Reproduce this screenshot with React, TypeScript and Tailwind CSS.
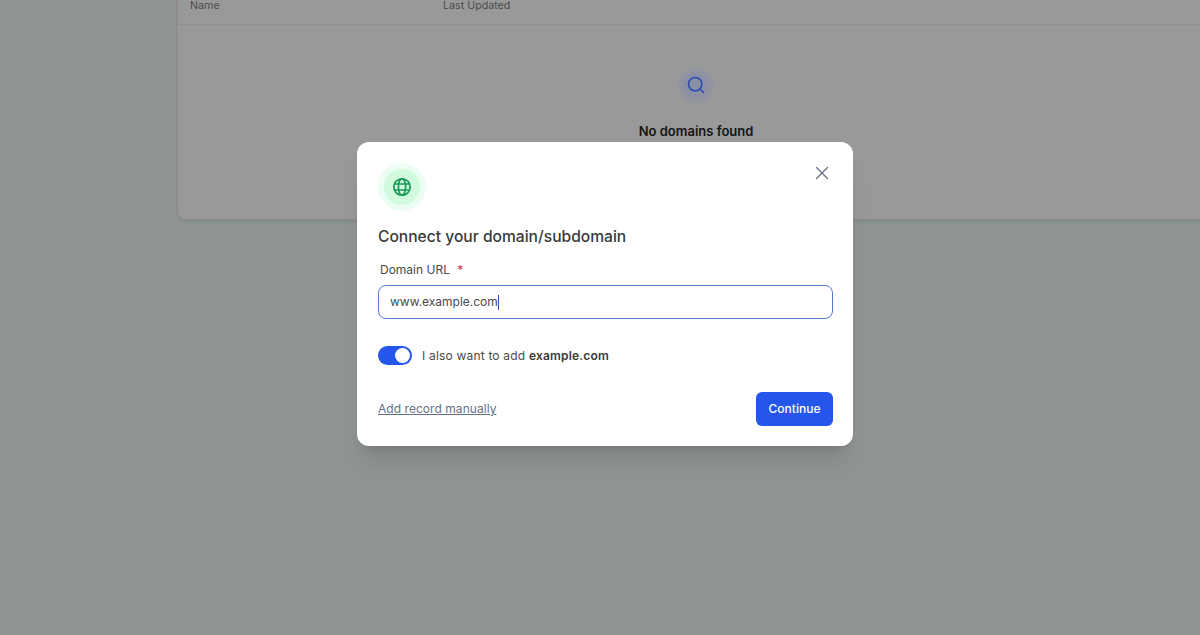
import React from "react";
import { Search, X } from "lucide-react";

function GlobeIcon() {
  return (
    <svg width="20" height="20" viewBox="0 0 20 20" fill="none" stroke="#179a55" strokeWidth="1.7">
      <circle cx="10" cy="10" r="8.2" />
      <ellipse cx="10" cy="10" rx="3.6" ry="8.2" />
      <path d="M2.6 7h14.8M2.6 13h14.8" />
    </svg>
  );
}

function EmptyTable() {
  return (
    <div className="h-[220px] w-[1037px] ml-[177px] rounded-bl-lg border-l border-b border-[#8f8f8f] bg-[#999999] shadow-sm flex flex-col">
      <div className="h-[25px] border-b border-[#909090] flex text-[10.7px] leading-[12px] text-[#4c4c4c]">
        <div className="w-[265px] pl-[12px]">Name</div>
        <div>Last Updated</div>
      </div>
      <div className="flex flex-col items-center pt-[42px]">
        <div className="w-9 h-9 rounded-full bg-[#92959f] flex items-center justify-center">
          <div className="w-[26px] h-[26px] rounded-full bg-[#8b90a4] flex items-center justify-center">
            <Search size={20} strokeWidth={2} className="text-[#2f4fb0]" />
          </div>
        </div>
        <div className="mt-[18px] text-[13px] leading-5 font-semibold text-[#161616]">No domains found</div>
      </div>
    </div>
  );
}

function ConnectModal() {
  return (
    <div className="absolute inset-0 flex items-start justify-center pt-[142px] pl-[10px]">
      <div className="relative w-[496px] h-[304px] bg-white rounded-xl shadow-xl px-[21px] pt-[21px]">
        <button className="absolute top-[20px] right-[20px] text-[#667085]">
          <X size={22} strokeWidth={1.5} />
        </button>
        <div className="w-12 h-12 rounded-full bg-[#ecfdf3] flex items-center justify-center">
          <div className="w-9 h-9 rounded-full bg-[#d1fadf] flex items-center justify-center">
            <GlobeIcon />
          </div>
        </div>
        <h2 className="mt-[14px] text-[15.6px] leading-6 font-medium text-[#3a3a3a]">Connect your domain/subdomain</h2>
        <div className="mt-[12px] pl-[2px] text-xs leading-[18px] text-[#4a4a4a]">
          Domain URL <span className="ml-1 text-[#d92d50]">*</span>
        </div>
        <div className="mt-[6px] h-[34px] w-[455px] rounded-lg border border-[#5578cf] flex items-center pl-[11px] text-xs text-[#4a4a4a]">
          www.example.com
          <span className="w-px h-[15px] bg-[#2f4fb0]" />
        </div>
        <div className="mt-[27px] flex items-center gap-[10px]">
          <div className="w-[34px] h-[19px] rounded-full bg-[#2556eb] flex items-center justify-end pr-[2px]">
            <div className="w-[15px] h-[15px] rounded-full bg-white" />
          </div>
          <span className="text-xs leading-[19px] tracking-[0.19px] text-[#4a4a4a]">
            I also want to add <b className="font-semibold text-[#3a3a3a]">example.com</b>
          </span>
        </div>
        <div className="mt-[27px] flex items-center justify-between w-[455px]">
          <a className="text-xs tracking-[0.05px] text-[#667085] underline">Add record manually</a>
          <button className="h-[34px] w-[77px] rounded-md bg-[#2556eb] text-xs font-medium text-white">Continue</button>
        </div>
      </div>
    </div>
  );
}

export default function App() {
  return (
    <div className="relative h-[635px] overflow-hidden bg-[#8f9494] font-['Inter',sans-serif]">
      <EmptyTable />
      <ConnectModal />
    </div>
  );
}
